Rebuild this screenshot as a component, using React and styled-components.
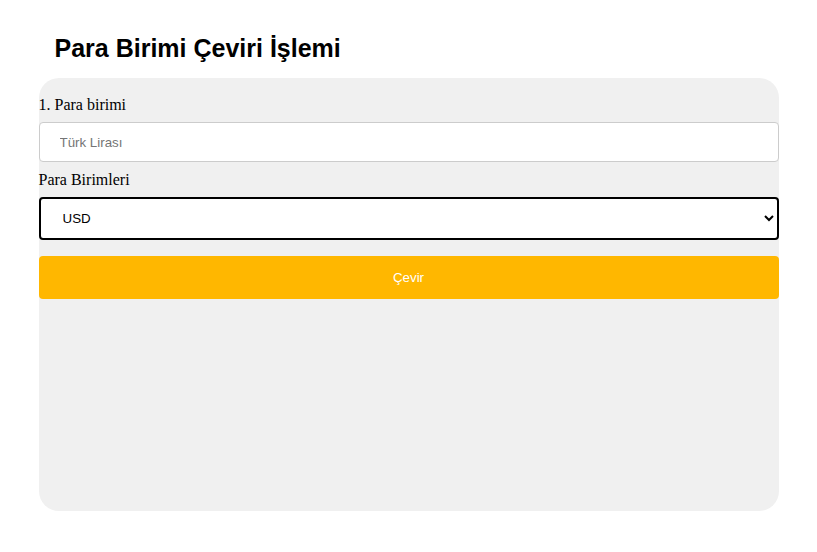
import React from 'react';
import styled, { createGlobalStyle } from 'styled-components';

const GlobalStyle = createGlobalStyle`
  body {
    margin: 0;
    background: #ffffff;
    font-family: "Liberation Serif", "Times New Roman", serif;
  }
`;

const Page = styled.div`
  width: 740px;
  margin: 0 auto;
  padding-top: 34px;
`;

const Title = styled.h1`
  margin: 0 0 15px 16px;
  font-family: "Liberation Sans", Arial, sans-serif;
  font-size: 25px;
  font-weight: 700;
  color: #000;
  line-height: 29px;
`;

const Panel = styled.form`
  box-sizing: border-box;
  height: 433px;
  padding-top: 17px;
  background: #f0f0f0;
  border-radius: 20px;
  display: flex;
  flex-direction: column;
`;

const Label = styled.label`
  display: block;
  font-size: 16px;
  line-height: 19px;
  color: #000;
  margin-bottom: 8px;
`;

const TextInput = styled.input`
  box-sizing: border-box;
  width: 100%;
  height: 40px;
  padding: 0 20px;
  border: 1px solid #cccccc;
  border-radius: 4px;
  background: #fff;
  font-family: "Liberation Sans", Arial, sans-serif;
  font-size: 13.33px;
  margin-bottom: 8px;
  outline: none;

  &::placeholder {
    color: #757575;
  }
`;

const Select = styled.select`
  box-sizing: border-box;
  width: 100%;
  height: 43px;
  padding: 0 18px;
  border: 2px solid #000;
  border-radius: 4px;
  background: #fff;
  color: #000;
  font-family: "Liberation Sans", Arial, sans-serif;
  font-size: 13.33px;
  margin-bottom: 16px;
`;

const Button = styled.button`
  box-sizing: border-box;
  width: 100%;
  height: 43px;
  border: none;
  border-radius: 4px;
  background: #ffb700;
  color: #fff;
  font-family: "Liberation Sans", Arial, sans-serif;
  font-size: 13.33px;
  cursor: pointer;
`;

export default function App() {
  return (
    <>
      <GlobalStyle />
      <Page>
        <Title>Para Birimi Çeviri İşlemi</Title>
        <Panel onSubmit={e => e.preventDefault()}>
          <Label htmlFor="amount">1. Para birimi</Label>
          <TextInput id="amount" type="text" placeholder="Türk Lirası" />
          <Label htmlFor="currency">Para Birimleri</Label>
          <Select id="currency" defaultValue="USD">
            <option value="USD">USD</option>
            <option value="EUR">EUR</option>
            <option value="GBP">GBP</option>
          </Select>
          <Button type="submit">Çevir</Button>
        </Panel>
      </Page>
    </>
  );
}
